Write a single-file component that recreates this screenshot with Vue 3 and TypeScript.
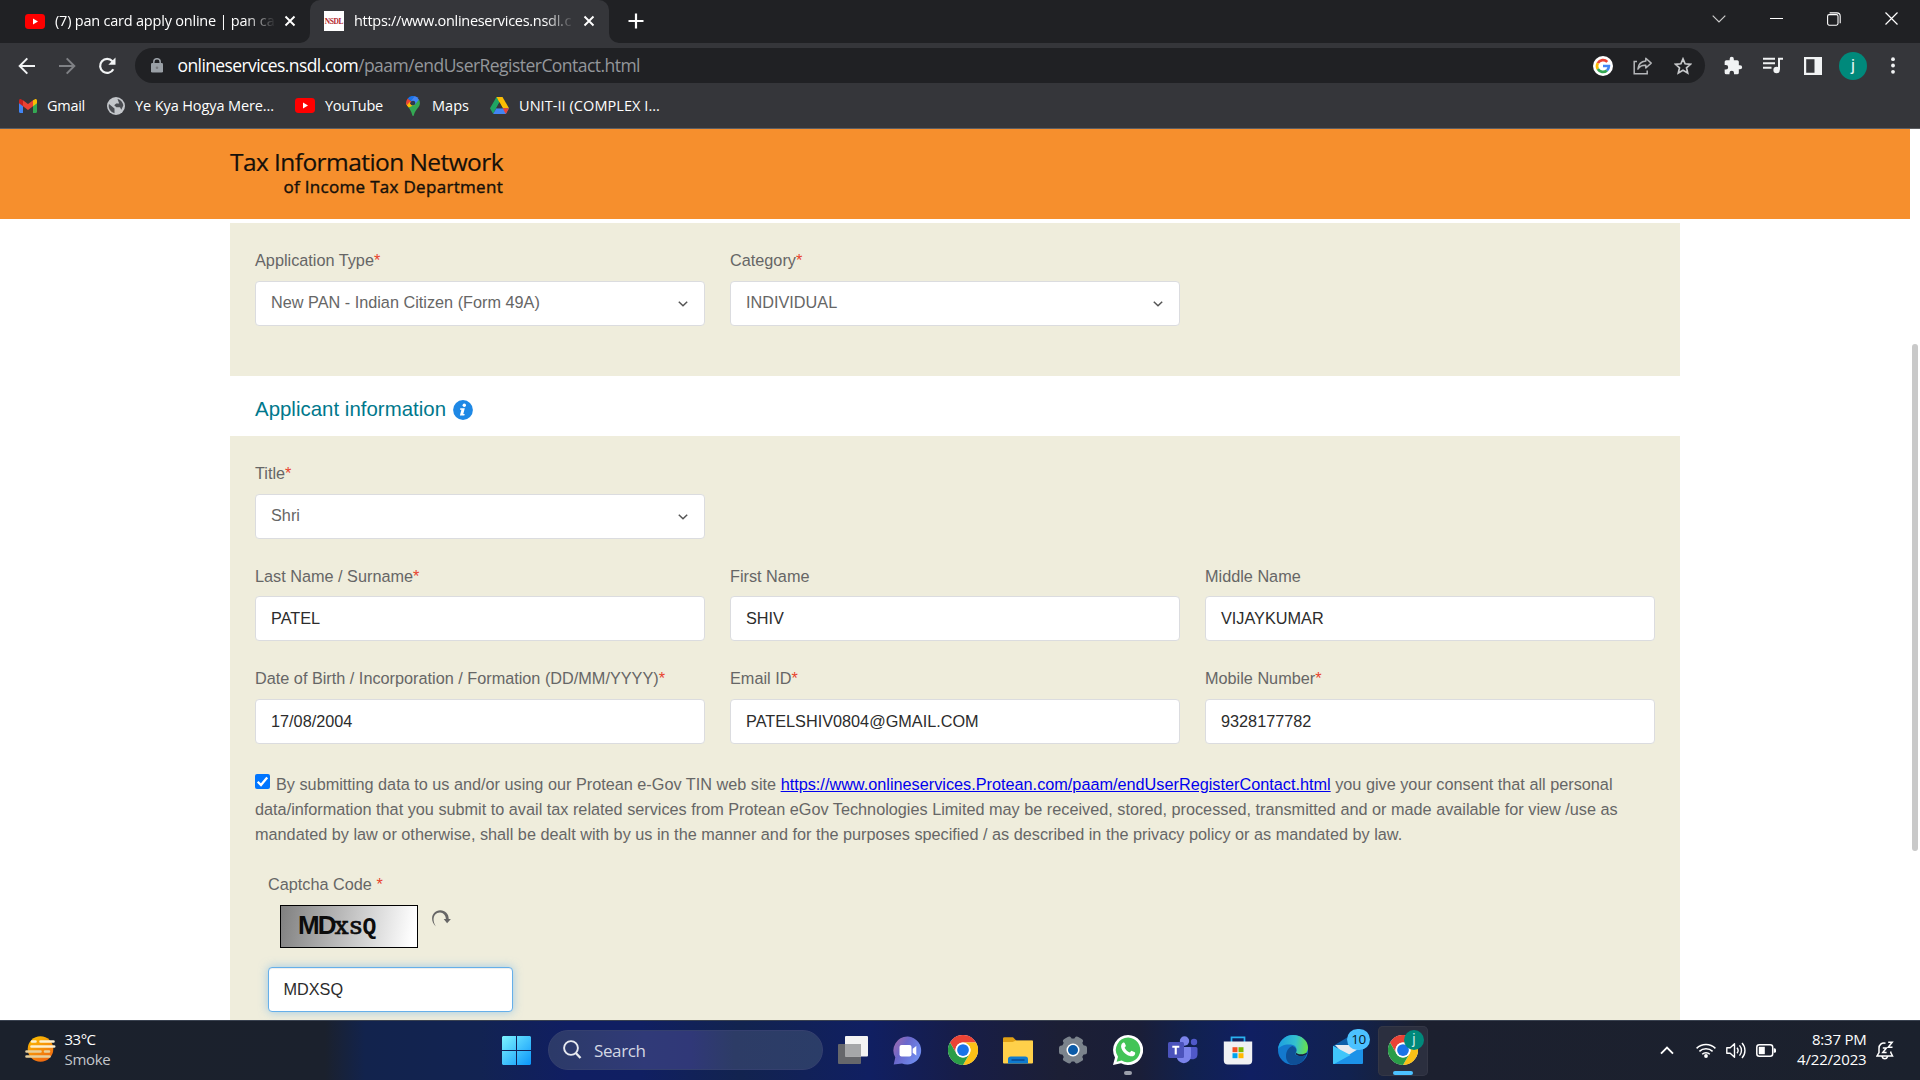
<script setup lang="ts">
import type { Directive } from 'vue'

interface Field {
  label: string
  value: string
  required?: boolean
  select?: boolean
}

/* Tracks a label in or out so that it fills the given width in pixels. */
const vFit: Directive<HTMLElement, number> = {
  mounted(el, { value }) {
    const natural = el.getBoundingClientRect().width
    const count = (el.textContent ?? '').trim().length
    el.style.letterSpacing = `${(value - natural) / count}px`
  },
}

const typeFields: Field[] = [
  { label: 'Application Type', value: 'New PAN - Indian Citizen (Form 49A)', required: true, select: true },
  { label: 'Category', value: 'INDIVIDUAL', required: true, select: true },
]
const applicantRows: Field[][] = [
  [{ label: 'Title', value: 'Shri', required: true, select: true }],
  [
    { label: 'Last Name / Surname', value: 'PATEL', required: true },
    { label: 'First Name', value: 'SHIV' },
    { label: 'Middle Name', value: 'VIJAYKUMAR' },
  ],
  [
    { label: 'Date of Birth / Incorporation / Formation (DD/MM/YYYY)', value: '17/08/2004', required: true },
    { label: 'Email ID', value: 'PATELSHIV0804@GMAIL.COM', required: true },
    { label: 'Mobile Number', value: '9328177782', required: true },
  ],
]
</script>

<template>
  <div class="desktop">
    <svg class="defs" width="0" height="0">
      <defs>
        <symbol id="youtube" viewBox="0 0 20 15">
          <rect width="20" height="15" rx="3.4" fill="#f00" />
          <path d="M8 4.6v5.8l5-2.9z" fill="#fff" />
        </symbol>
        <symbol id="cross" viewBox="0 0 12 12">
          <path d="M1.5 1.5l9 9M10.5 1.5l-9 9" stroke="#fff" stroke-width="1.9" />
        </symbol>
        <symbol id="chrome" viewBox="0 0 48 48">
          <circle cx="24" cy="24" r="24" fill="#fff" />
          <path d="M3.2 12A24 24 0 0 1 44.8 12H24A12 12 0 0 0 13.6 30z" fill="#ea4335" />
          <path d="M44.8 12A24 24 0 0 1 24 48L34.4 30A12 12 0 0 0 34.4 18L24 12z" fill="#fbc116" />
          <path d="M24 48A24 24 0 0 1 3.2 12L13.6 30A12 12 0 0 0 34.4 30z" fill="#2a9d48" />
          <circle cx="24" cy="24" r="12" fill="#fff" />
          <circle cx="24" cy="24" r="9.4" fill="#1a73e8" />
        </symbol>
      </defs>
    </svg>

    <div class="tabstrip">
      <div class="tab">
        <svg class="fav" width="20" height="15"><use href="#youtube" /></svg>
        <div class="tabtext"><span v-fit="201">(7) pan card apply online | pan</span><span>&nbsp;ca</span></div>
        <svg class="x" width="12" height="12"><use href="#cross" /></svg>
      </div>
      <div class="tab active">
        <svg class="curve left" width="10" height="10" viewBox="0 0 10 10"><path d="M10 0v10H0A10 10 0 0 0 10 0" fill="#35363a" /></svg>
        <div class="nsdl"><span>NSDL</span></div>
        <div class="tabtext"><span v-fit="206">https://www.onlineservices.nsdl</span><span v-fit="12">.c</span></div>
        <svg class="x" width="12" height="12"><use href="#cross" /></svg>
        <svg class="curve right" width="10" height="10" viewBox="0 0 10 10"><path d="M0 0v10h10A10 10 0 0 1 0 0" fill="#35363a" /></svg>
      </div>
      <svg class="plus" width="16" height="16" viewBox="0 0 16 16"><path d="M8 .5v15M.5 8h15" stroke="#fff" stroke-width="2.2" /></svg>
      <div class="controls">
        <div><svg width="14" height="8" viewBox="0 0 14 8"><path d="M.7 .7L7 7 13.300 .7" fill="none" stroke="#ccc" stroke-width="1.2" /></svg></div>
        <div><svg width="13" height="13" viewBox="0 0 13 13"><path d="M0 6.500h13" stroke="#fff" /></svg></div>
        <div><svg width="14" height="14" viewBox="0 0 14 14" fill="none" stroke="#fff" stroke-width="1.100"><rect x=".6" y="2.600" width="10.400" height="10.600" rx="1.600" /><path d="M2.600 .9h7.200a3.400 3.400 0 0 1 3.400 3.400v7" /></svg></div>
        <div><svg width="13" height="13" viewBox="0 0 13 13"><path d="M.5 .5l12 12M12.500 .5l-12 12" stroke="#fff" stroke-width="1.200" /></svg></div>
      </div>
    </div>

    <div class="toolbar">
      <div class="cell"><svg width="18" height="18" viewBox="0 0 18 18" fill="none" stroke="#f1f3f4" stroke-width="2"><path d="M17 9H2M9.300 1.400L1.700 9l7.600 7.600" /></svg></div>
      <div class="cell"><svg width="18" height="18" viewBox="0 0 18 18" fill="none" stroke="#7f8185" stroke-width="2"><path d="M1 9h15M8.700 1.400L16.300 9l-7.600 7.600" /></svg></div>
      <div class="cell"><svg width="19" height="18" viewBox="0 0 19 18"><path d="M15.300 12.200A7 7 0 1 1 14.400 4.300" fill="none" stroke="#f1f3f4" stroke-width="2.200" /><path d="M17.500 .6v7.200h-7.200z" fill="#f1f3f4" /></svg></div>
      <div class="omnibox">
        <svg class="lock" width="12" height="15" viewBox="0 0 12 15"><rect y="5" width="12" height="9.600" rx="1.300" fill="#9aa0a6" /><path d="M2.800 5.500V3.900a3.200 3.200 0 0 1 6.400 0v1.600" fill="none" stroke="#9aa0a6" stroke-width="1.500" /><circle cx="6" cy="9.800" r="1.300" fill="#77797d" /></svg>
        <div class="url"><span v-fit="180.500" class="host">onlineservices.nsdl.com</span><span v-fit="282">/paam/endUserRegisterContact.html</span></div>
        <div class="cell">
          <svg width="20" height="20" viewBox="0 0 20 20"><circle cx="10" cy="10" r="10" fill="#fff" /><g fill="none" stroke-width="2.700"><path d="M14.300 5.900A6 6 0 0 0 4.800 7.100" stroke="#ea4335" /><path d="M4.800 7.100a6 6 0 0 0 0 5.900" stroke="#fbbc05" /><path d="M4.800 13a6 6 0 0 0 9.100 1.400" stroke="#34a853" /><path d="M13.900 14.400a6 6 0 0 0 2-4.400H10" stroke="#4285f4" /></g></svg>
        </div>
        <div class="cell">
          <svg width="20" height="18" viewBox="0 0 20 18" fill="none" stroke="#b4b6b9" stroke-width="1.500"><path d="M4 4.500H1.200v12.200h13v-3.200" /><path d="M12.800 1.200l5.400 4.900-5.400 4.900V8.200C9 8 6.600 9.300 4.900 12 5.300 7.300 8 4.500 12.800 4z" stroke-linejoin="round" /></svg>
        </div>
        <div class="cell">
          <svg width="18" height="18" viewBox="0 0 18 18" fill="none" stroke="#c6c8ca" stroke-width="1.700"><path d="M9 1.900l2.100 4.900 5.400.5-4 3.500 1.200 5.200L9 13.300 4.300 16l1.200-5.200-4-3.500 5.400-.5z" /></svg>
        </div>
      </div>
      <div class="cell ext">
        <svg width="20" height="20" viewBox="0 0 24 24"><path d="M20.500 11H19V7a2 2 0 0 0-2-2h-4V3.500a2.500 2.500 0 0 0-5 0V5H4a2 2 0 0 0-2 2v3.800h1.500a2.700 2.700 0 0 1 0 5.400H2V20a2 2 0 0 0 2 2h3.800v-1.500a2.700 2.700 0 0 1 5.400 0V22H17a2 2 0 0 0 2-2v-4h1.500a2.500 2.500 0 0 0 0-5" fill="#f1f3f4" /></svg>
      </div>
      <div class="cell">
        <svg width="20" height="17" viewBox="0 0 20 17" fill="none" stroke="#f1f3f4" stroke-width="2"><path d="M0 1.800h12M0 6.300h12M0 10.800h8.500M20 1.800h-4v11" /><circle cx="13.600" cy="13" r="3.200" fill="#f1f3f4" stroke="none" /></svg>
      </div>
      <div class="cell">
        <svg width="18" height="18" viewBox="0 0 18 18"><path d="M0 0h18v18H0zM2.200 2.200v13.600h8.300V2.200z" fill="#f1f3f4" fill-rule="evenodd" /></svg>
      </div>
      <div class="cell"><div class="avatar">j</div></div>
      <div class="cell">
        <svg width="4" height="17" viewBox="0 0 4 17" fill="#f1f3f4"><circle cx="2" cy="2.200" r="1.900" /><circle cx="2" cy="8.500" r="1.900" /><circle cx="2" cy="14.800" r="1.900" /></svg>
      </div>
    </div>

    <div class="bookmarks">
      <div class="bm b1">
        <svg width="18" height="14" viewBox="0 0 18 14"><path d="M0 2v10.800c0 .7.500 1.200 1.200 1.200H4V5z" fill="#4285f4" /><path d="M18 2v10.800c0 .7-.5 1.200-1.200 1.200H14V5z" fill="#34a853" /><path d="M14 1.200L16 .2c1-.5 2 .3 2 1.500v2.500l-4 3z" fill="#fbbc04" /><path d="M4 1.200L2 .2C1-.3 0 .5 0 1.700v2.500l4 3z" fill="#c5221f" /><path d="M4 1.200L9 5l5-3.800v6L9 11 4 7.200z" fill="#ea4335" /></svg>
        <span v-fit="38">Gmail</span>
      </div>
      <div class="bm b2">
        <svg width="18" height="18" viewBox="0 0 18 18"><circle cx="9" cy="9" r="9" fill="#c3c6ca" /><path d="M2 7l5.500 4.500v4.700A7.300 7.300 0 0 1 2 7M10.500 2c3 .6 5.500 3.200 5.800 6.500l-2 4.200-1.300-2.500H9.400l-2.200-2 2-1.700h3z" fill="#4b4d52" /></svg>
        <span v-fit="139">Ye Kya Hogya Mere...</span>
      </div>
      <div class="bm b3">
        <svg width="20" height="15"><use href="#youtube" /></svg>
        <span v-fit="58">YouTube</span>
      </div>
      <div class="bm b4">
        <svg width="14" height="20" viewBox="0 0 14 20"><path d="M2.800 11.200C1.200 9.200 0 8.600.1 6.400L5 9z" fill="#fbbc04" /><path d="M7 20c-.5 0-.7-.6-.9-1.200-.6-2.600-1.800-5.100-3.500-7.200L12.900 3.300c2 3.800.8 6.500-1.500 9.300-1.600 2-2.800 3.700-3.400 6.100-.2.700-.4 1.300-1 1.300" fill="#34a853" /><path d="M.1 6.800C.3 5 .7 3.800 1.800 2.500L5.500 5.600 1.800 10.200C.7 9 0 8.600.1 6.800" fill="#ea4335" /><path d="M1.700 2.500A6.900 6.900 0 0 1 8.800.2L4.900 5.100z" fill="#1a73e8" /><path d="M8.700.1a7 7 0 0 1 4.200 3.600L8.500 9 4.700 5z" fill="#4285f4" /><path d="M2.700 11.500L.8 9.200l4.100-4.500a2.800 2.800 0 0 0 4.100 4z" fill="#fbbc04" /><circle cx="7" cy="7" r="2.300" fill="#2d3a4d" /></svg>
        <span v-fit="37">Maps</span>
      </div>
      <div class="bm b5">
        <svg width="19" height="17" viewBox="0 0 19 17"><path d="M6.500 0h6L6.300 11 3.200 17 0 11.300z" fill="#1fa463" /><path d="M6.500 0h6l6.500 11.300h-6.300z" fill="#fbbc04" /><path d="M3.200 17l3.100-5.700H19L15.800 17z" fill="#4285f4" /><path d="M19 11.300L15.800 17l-3.100-5.700z" fill="#ea4335" /><path d="M9.500 5.300l3.300 6H6.300z" fill="#35363a" /></svg>
        <span v-fit="141">UNIT-II (COMPLEX I...</span>
      </div>
    </div>

    <div class="view">
      <div class="web">
        <header class="tin">
          <div class="line1"><span v-fit="273">Tax Information Network</span></div>
          <div class="line2"><span v-fit="219.500">of Income Tax Department</span></div>
        </header>

        <section class="panel first">
          <div class="row">
            <div v-for="f in typeFields" :key="f.label" class="field">
              <label>{{ f.label }}<i>*</i></label>
              <div class="box select">
                <span>{{ f.value }}</span>
                <svg width="10" height="6" viewBox="0 0 10 6"><path d="M.8.8L5 4.800 9.200.8" fill="none" stroke="#555" stroke-width="1.500" /></svg>
              </div>
            </div>
          </div>
        </section>

        <h2>
          <span v-fit="191">Applicant information</span>
          <svg width="20" height="20" viewBox="0 0 20 20"><circle cx="10" cy="10" r="9.900" fill="#1e88e5" /><circle cx="11.300" cy="5.300" r="1.700" fill="#fff" /><path d="M7.300 8.300h4.500l-1.500 5.600h1.400l-.4 1.500H6.900l1.500-5.600H7z" fill="#fff" /></svg>
        </h2>

        <section class="panel second">
          <div v-for="(row, n) in applicantRows" :key="n" class="row">
            <div v-for="f in row" :key="f.label" class="field">
              <label>{{ f.label }}<i v-if="f.required">*</i></label>
              <div class="box" :class="{ select: f.select }">
                <span>{{ f.value }}</span>
                <svg v-if="f.select" width="10" height="6" viewBox="0 0 10 6"><path d="M.8.8L5 4.800 9.200.8" fill="none" stroke="#555" stroke-width="1.500" /></svg>
              </div>
            </div>
          </div>

          <div class="consent">
            <div>
              <svg class="check" width="15" height="15" viewBox="0 0 15 15"><rect width="15" height="15" rx="2" fill="#0075ff" /><path d="M2.700 7.800l3.300 3.300 6.200-7.600" fill="none" stroke="#fff" stroke-width="2.300" /></svg>
              <span>By submitting data to us and/or using our Protean e-Gov TIN web site <a>https://www.onlineservices.Protean.com/paam/endUserRegisterContact.html</a> you give your consent that all personal</span>
            </div>
            <div>data/information that you submit to avail tax related services from Protean eGov Technologies Limited may be received, stored, processed, transmitted and or made available for view /use as</div>
            <div>mandated by law or otherwise, shall be dealt with by us in the manner and for the purposes specified / as described in the privacy policy or as mandated by law.</div>
          </div>

          <div class="captcha">
            <label>Captcha Code <i>*</i></label>
            <div class="challenge">
              <div class="image"><b>MD</b><span class="m1">x</span><span class="m2">s</span><b class="m3">Q</b></div>
              <svg width="20" height="17" viewBox="0 0 20 17"><path d="M4.800 16.400C-2.200 9.500 1.500.4 9.300.3c5 0 8.500 3.700 8.400 8.700h2.200l-3.800 4.300L12.700 9h2.200C14.800 5.500 12.400 2.600 9 2.500 3.200 2.400.2 9.500 4.800 16.400" fill="#666" /></svg>
            </div>
            <div class="box focus"><span>MDXSQ</span></div>
          </div>
        </section>
      </div>
      <div class="scroll"><div class="thumb"></div></div>
    </div>

    <div class="taskbar">
      <div class="weather">
        <svg width="31" height="26" viewBox="0 0 31 26">
          <defs><linearGradient id="sun" x1="0" y1="0" x2=".5" y2="1"><stop offset="0" stop-color="#fdc500" /><stop offset="1" stop-color="#f06c10" /></linearGradient></defs>
          <circle cx="15.500" cy="13" r="12.800" fill="url(#sun)" />
          <g stroke-width="2.600" stroke-linecap="round"><path d="M7 5.500h3.500M15.500 5.500h13M6.500 10.500h22.700" stroke="#fdf0cf" /><path d="M1.500 15.500h14M20 15.500h4M1.500 20.500h23" stroke="#e8cf9a" /></g>
        </svg>
        <div class="wtext"><div><span v-fit="31">33°C</span></div><div class="dim"><span v-fit="46">Smoke</span></div></div>
      </div>

      <div class="start">
        <svg width="29" height="29" viewBox="0 0 29 29">
          <defs><linearGradient id="win" x1="0" y1="0" x2="1" y2="1"><stop offset="0" stop-color="#7df3ff" /><stop offset="1" stop-color="#0a95fb" /></linearGradient></defs>
          <path d="M1 0h13v14H0V1zM15 0h13l1 1v13H15zM0 15h14v14H1l-1-1zM15 15h14v13l-1 1H15z" fill="url(#win)" />
        </svg>
      </div>
      <div class="search">
        <svg width="19" height="20" viewBox="0 0 19 20"><circle cx="8" cy="8" r="6.900" fill="none" stroke="#e8eaf0" stroke-width="1.900" /><path d="M12.800 13l4.700 5" stroke="#e8eaf0" stroke-width="2.400" /></svg>
        <span v-fit="51.500">Search</span>
      </div>

      <div class="apps">
        <div class="app"><svg width="30" height="28" viewBox="0 0 30 28"><rect y="8" width="23" height="20" rx="1" fill="#66676b" /><rect x="7" y="0" width="23" height="20.500" rx="1" fill="#f3f3f3" /><path d="M7 8h16v12.500H7z" fill="#a6a7a9" /></svg></div>
        <div class="app">
          <svg width="30" height="29" viewBox="0 0 30 29"><defs><linearGradient id="chat" x1="0" y1="0" x2="1" y2=".6"><stop offset="0" stop-color="#a86aa6" /><stop offset=".45" stop-color="#6a68cc" /><stop offset="1" stop-color="#6f8df0" /></linearGradient></defs><path d="M15 .5a14 14 0 1 1-6 27L.7 28.400l1.600-7A14 14 0 0 1 15 .5" fill="url(#chat)" /><rect x="6.500" y="9" width="12" height="11.500" rx="2" fill="#fff" /><path d="M19.700 12.800L23.300 10v9.500l-3.600-2.800z" fill="#fff" /></svg>
        </div>
        <div class="app"><svg width="30" height="30"><use href="#chrome" /></svg></div>
        <div class="app">
          <svg width="30" height="27" viewBox="0 0 30 27"><path d="M0 1.500Q0 .2 1.500.2H10l3.500 3.600H30V25H0z" fill="#e0a015" /><path d="M0 5h9.500L13 3.600h16Q30 3.600 30 5v20.500q0 1-1 1H1q-1 0-1-1z" fill="#ffd04a" /><path d="M5 26.500v-4.200q0-2.800 2.800-2.800h14.400q2.800 0 2.800 2.800v4.200z" fill="#0f7bd0" /><path d="M8.500 23h13" stroke="#0a4c94" stroke-width="1.600" /></svg>
        </div>
        <div class="app">
          <svg width="30" height="30" viewBox="0 0 30 30"><g fill="#7b838c"><circle cx="15" cy="15" r="11.500" /><rect x="10.500" y="1" width="9" height="28" rx="2.500" transform="rotate(30 15 15)" /><rect x="10.500" y="1" width="9" height="28" rx="2.500" transform="rotate(90 15 15)" /><rect x="10.500" y="1" width="9" height="28" rx="2.500" transform="rotate(150 15 15)" /></g><circle cx="15" cy="15" r="6.500" fill="#fff" /><circle cx="15" cy="15" r="5" fill="#0c5ba8" /></svg>
        </div>
        <div class="app">
          <svg width="30" height="30" viewBox="0 0 30 30"><path d="M15 0a15 15 0 1 1-7 28.200L0 30l2-7.600A15 15 0 0 1 15 0" fill="#fff" /><path d="M15.200 2.600A12.300 12.300 0 1 1 8.700 25.500l-5.100 1.300 1.400-5A12.300 12.300 0 0 1 15.200 2.600" fill="#43c457" /><path d="M10.200 7.600c.8-.4 1.300 0 1.600.7l1 2.300c.2.700-.4 1.300-1.200 2.100 1.200 2.300 2.900 3.900 5.300 4.900.8-.8 1.300-2 2.100-1.700l2.800 1.400c.8.400.3 2.400-.6 3.200-2 1.500-4.700.8-7.300-.7-2.500-1.500-4.500-3.800-5.500-6.500-.8-2.200 0-4.900 1.800-5.700" fill="#fff" /></svg>
          <i class="mark"></i>
        </div>
        <div class="app">
          <svg width="30" height="28" viewBox="0 0 30 28"><circle cx="16.500" cy="5" r="4.700" fill="#7b83eb" /><circle cx="26" cy="6" r="3.200" fill="#5059c9" /><path d="M20 11h8q1.500 0 1.500 1.500v6a5 5 0 0 1-9.500 2z" fill="#5059c9" /><path d="M9.500 11H22q1 0 1 1.200V20a7.200 7.200 0 0 1-14.400 0v-8q0-1 .9-1" fill="#7b83eb" /><rect x="0" y="6" width="16" height="16" rx="1.500" fill="#4b53bc" /><path d="M4.300 9.800h7v1.900H8.800v6.800H6.700v-6.800H4.300z" fill="#fff" /></svg>
        </div>
        <div class="app">
          <svg width="30" height="29" viewBox="0 0 30 29"><path d="M8.500 6.500V1.300h13v5.200" fill="none" stroke="#2ab1f0" stroke-width="1.700" /><path d="M.8 5.500h28.400v19q0 4-4 4H4.800q-4 0-4-4z" fill="#f0f1f3" /><path d="M9.500 11.200h5v5h-5z" fill="#f25022" /><path d="M15.500 11.200h5v5h-5z" fill="#7fba00" /><path d="M9.500 17.200h5v5h-5z" fill="#00a4ef" /><path d="M15.500 17.200h5v5h-5z" fill="#ffb900" /></svg>
        </div>
        <div class="app">
          <svg width="30" height="30" viewBox="0 0 30 30"><defs><linearGradient id="edge" x1="0" y1=".2" x2="1" y2=".3"><stop offset="0" stop-color="#1b9de2" /><stop offset=".6" stop-color="#34c1ce" /><stop offset="1" stop-color="#66e04d" /></linearGradient></defs><circle cx="15" cy="15" r="15" fill="#1379ce" /><path d="M0 14.500C.7 6.200 7 0 15 0c8.500 0 15 5.500 15 12.500 0 5-3.800 8-8 8-3.500 0-5-1.300-4.500-2.500 2.500-3 .8-8-4.500-8.500C7 8.900 1.200 11 0 14.500" fill="url(#edge)" /><path d="M8 21.500c0-6 3-9.500 6.500-10.500 4 1.500 4.800 4.800 3 7-1 1.300.8 3 4.500 3 3 0 5-.5 6.500-1.800C26.500 25.500 21.500 30 16 30c-4.500 0-8-4-8-8.500" fill="#0f4f96" /><path d="M18 17.500c-1 1.800 1 3.500 5 3.500 2 0 4-.7 5.300-1.500l1.200-2-2.500 1c-4 1.600-8 .8-9-1" fill="#171d42" /></svg>
        </div>
        <div class="app">
          <svg width="30" height="27" viewBox="0 0 30 27"><path d="M0 9L15 0l15 9v4H0z" fill="#0d5ea8" /><path d="M2 8h26v9l-13 5z" fill="#e6e9ee" /><path d="M0 9l19 11-12 7H1q-1 0-1-1z" fill="#36bdf5" /><path d="M30 9v17q0 1-1 1H1z" fill="#1c92e8" /><path d="M0 9l17.500 9L1 27q-1 0-1-1z" fill="#40c6fa" /></svg>
          <span class="count">10</span>
        </div>
        <div class="app current">
          <svg width="30" height="30"><use href="#chrome" /></svg>
          <span class="who">j</span>
          <i class="mark blue"></i>
        </div>
      </div>

      <div class="tray">
        <svg class="up" width="14" height="9" viewBox="0 0 14 9"><path d="M1 7.700L7 1.500l6 6.200" fill="none" stroke="#fff" stroke-width="1.900" /></svg>
        <svg class="wifi" width="20" height="15" viewBox="0 0 20 15" fill="none" stroke="#fff" stroke-width="1.500"><path d="M.6 5.400a13.300 13.300 0 0 1 18.800 0M3.400 8.400a9.400 9.400 0 0 1 13.200 0M6.200 11.300a5.400 5.400 0 0 1 7.600 0" /><circle cx="10" cy="13" r="1.900" fill="#fff" stroke="none" /></svg>
        <svg class="vol" width="20" height="17" viewBox="0 0 20 17" fill="none" stroke="#fff" stroke-width="1.400"><path d="M.8 5.700h3.400l4.300-4v13.600l-4.300-4H.8z" stroke-linejoin="round" /><path d="M11 5.800a4.200 4.200 0 0 1 0 5.400M13.500 3.400a7.600 7.600 0 0 1 0 10.200M16 1a11 11 0 0 1 0 15" /></svg>
        <svg class="bat" width="20" height="13" viewBox="0 0 20 13"><rect x=".8" y=".8" width="15.900" height="11.400" rx="2.500" fill="none" stroke="#fff" stroke-width="1.500" /><rect x="2.800" y="2.800" width="6" height="7.400" fill="#fff" /><path d="M17.700 4.300h.8q1.500 0 1.500 1.500v1.400q0 1.500-1.500 1.500h-.8z" fill="#fff" /></svg>
        <div class="clock"><div><span v-fit="54.500">8:37 PM</span></div><div><span v-fit="69.500">4/22/2023</span></div></div>
        <svg width="18" height="19" viewBox="0 0 18 19" fill="none" stroke="#fff" stroke-width="1.500"><path d="M9.500 2.200C5.500 1.300 3 4 3 7.200v4.300L1 15h15.500l-1.700-3.500v-1M6 15.500a2.900 2.900 0 0 0 5.600 0" /><path d="M6.800 7h3.600l-3.600 4.500h3.800M12.200 1.200h4l-4 5h4.300" /></svg>
      </div>
    </div>
  </div>
</template>

<style>
body {
  margin: 0;
  overflow: hidden;
}
</style>

<style scoped>
.desktop {
  width: 1920px;
  height: 1080px;
  display: flex;
  flex-direction: column;
  overflow: hidden;
  background: #fff;
  font-family: 'Open Sans', 'Noto Sans', sans-serif;
  white-space: nowrap;
}
.defs { position: absolute; }
svg { display: block; flex: none; }
i { font-style: normal; }

.tabstrip { height: 43px; background: #202124; display: flex; flex: none; }
.tab { display: flex; align-items: center; color: #fff; font-size: 14.5px; width: 310px; box-sizing: border-box; padding-left: 25px; height: 42px; }
.tab .fav { margin-right: 10px; }
.tabtext { width: 221px; line-height: 24px; -webkit-mask-image: linear-gradient(90deg, #000 190px, transparent 221px); mask-image: linear-gradient(90deg, #000 190px, transparent 221px); }
.x { margin-left: 8px; }
.tab.active { position: relative; width: 299px; height: 43px; background: #35363a; border-radius: 10px 10px 0 0; padding: 0 0 1px 14px; }
.curve { position: absolute; bottom: 0; }
.curve.left { left: -10px; }
.curve.right { right: -10px; }
.nsdl { width: 20px; height: 20px; background: #fff; display: flex; align-items: center; justify-content: center; margin-right: 10px; }
.nsdl span { font: bold 7.500px 'Liberation Serif', serif; color: #b3262d; letter-spacing: -.4px; }
.plus { margin: 13px 0 0 19px; }
.controls { margin-left: auto; display: flex; height: 37px; }
.controls div { width: 57.300px; display: flex; align-items: center; justify-content: center; }

.toolbar { height: 45px; background: #35363a; display: flex; align-items: center; padding-left: 7px; flex: none; }
.cell { width: 40px; display: flex; justify-content: center; align-items: center; flex: none; }
.omnibox { width: 1570px; height: 35px; border-radius: 18px; background: #202124; margin-left: 8px; display: flex; align-items: center; box-sizing: border-box; padding: 0 2px 0 16px; }
.url { margin: -1px 0 0 14.500px; flex: 1; font-size: 17.500px; color: #94979b; line-height: 28px; }
.host { color: #fff; }
.ext { margin-left: 8px; }
.avatar { width: 28px; height: 28px; border-radius: 50%; background: #00897b; color: #e6f4f2; font: 17px/27px Roboto, sans-serif; text-align: center; }

.bookmarks { height: 41px; background: #35363a; border-bottom: 1px solid #5c5e62; box-sizing: border-box; display: flex; padding: 0 0 5px 19px; flex: none; }
.bm { display: flex; align-items: center; color: #fff; font-size: 14.500px; box-sizing: border-box; }
.bm svg { margin-right: 10px; }
.bm span { margin-top: -1px; }
.b1 { width: 88px; }
.b2 { width: 188px; }
.b3 { width: 111px; }
.b4 { width: 84px; }
.b4 svg { margin-right: 12px; }

.view { height: 891px; flex: none; display: flex; overflow: hidden; font: 16.250px/25px 'Liberation Sans', Arial, sans-serif; color: #666; }
.web { width: 1910px; }
.tin { height: 90px; background: #f68f2d; box-sizing: border-box; padding: 16px 0 0 230px; color: #15100a; }
.line1, .line2 { font-family: 'Open Sans', 'Noto Sans', sans-serif; width: 273px; text-align: right; }
.line1 { font-size: 24.500px; line-height: 34px; -webkit-text-stroke: .2px #15100a; }
.line2 { font-size: 17px; line-height: 20px; -webkit-text-stroke: .4px #15100a; margin-top: -2px; }
.panel { width: 1450px; margin-left: 230px; background: #efeddc; box-sizing: border-box; padding: 25px 25px 0; }
.first { margin-top: 4px; height: 153px; }
.second { height: 700px; }
.row { display: flex; gap: 25px; margin-bottom: 25px; }
.field { width: 450px; }
label { display: block; height: 25px; margin-bottom: 8px; }
.second .row:nth-child(2) label { margin-bottom: 7px; }
label i { color: #e8432e; }
.box { height: 45px; box-sizing: border-box; border: 1px solid #dbdcdf; border-radius: 4px; background: #fff; color: #2c2c2c; display: flex; align-items: center; padding: 0 15px; }
.select { color: #666; justify-content: space-between; padding: 0 16px 2px 15px; }
.select svg { margin-top: 3px; }
h2 { margin: 0; height: 60px; display: flex; align-items: center; box-sizing: border-box; padding: 7px 0 0 255px; font-size: 20.400px; font-weight: normal; color: #00788c; }
h2 svg { margin: 1px 0 0 7px; }
.consent { margin-top: 28px; }
.consent div { height: 25px; width: max-content; }
.consent div:first-child { display: flex; }
.check { margin: 2px 6px 0 0; }
a { color: #0000ee; text-decoration: underline; }
.captcha { margin: 25px 0 0 13px; }
.challenge { display: flex; margin-left: 12px; }
.challenge svg { margin: 5px 0 0 12.500px; }
.image { width: 138px; height: 43px; box-sizing: border-box; border: 1px solid #000; background: linear-gradient(100deg, #808080, #fff 96%); color: #0c0c0c; display: flex; align-items: baseline; padding-left: 17px; line-height: 38px; }
.image b:first-child { font-size: 26px; letter-spacing: -2px; }
.m1, .m2 { font-family: 'DejaVu Serif', serif; font-size: 25px; -webkit-text-stroke: .7px #0c0c0c; }
.m1 { width: 15px; }
.m2 { width: 13px; }
.m3 { font-family: 'Liberation Mono', monospace; font-size: 23px; }
.focus { width: 245px; margin-top: 19px; border-color: #66afe9; box-shadow: 0 0 10px rgba(102, 175, 233, .6), inset 0 1px 1px rgba(0, 0, 0, .07); padding-left: 14.500px; }
.scroll { width: 10px; background: #fff; }
.thumb { width: 6px; height: 507px; margin: 215px 0 0 2px; border-radius: 3px; background: #c9c9c9; }

.taskbar { height: 60px; flex: none; box-sizing: border-box; border-top: 1px solid #3a4250; display: flex; align-items: center; color: #fff; background: linear-gradient(90deg, #1b212c 0, #1b212d 325px, #12234d 365px, #122352 480px, #101e62 570px, #101f62 640px, #12234f 740px, #101f62 870px, #171d48 960px, #1c1f35 1060px, #1a1e38 1140px, #11214f 1190px, #101f62 1250px, #11224f 1350px, #1c202f 1420px, #1b212d 100%); }
.weather { display: flex; width: 501.500px; padding-left: 25px; box-sizing: border-box; align-items: center; }
.weather svg { margin: -3px 8.500px 0 0; }
.wtext { font-size: 15px; line-height: 20px; margin-top: -3px; }
.dim { color: #c3c6cb; }
.start { width: 46.500px; }
.search { width: 275px; height: 40px; border-radius: 20px; background: linear-gradient(90deg, #2c3a68, #303a78 35%, #303878 52%, #2d3c66 68%, #2b3d68); display: flex; align-items: center; box-sizing: border-box; padding-left: 14px; color: #d3d7e3; font-size: 17px; border: 1px solid #35406f; margin-top: -1px; }
.search span { margin: 0 0 0 12px; }
.apps { display: flex; margin-left: 2.500px; }
.app { position: relative; width: 55px; height: 50px; display: flex; align-items: center; justify-content: center; }
.app > svg { margin-top: -1px; }
.current { width: 50px; margin-left: 2.500px; background: #2b2f3f; border-radius: 5px; box-shadow: inset 0 0 0 1px #343746; }
.mark { position: absolute; left: 50%; bottom: 1px; width: 8px; height: 4px; margin-left: -4px; border-radius: 2px; background: #9b9fab; }
.mark.blue { width: 20px; margin-left: -10px; background: #4cc2ff; }
.count, .who { position: absolute; text-align: center; border-radius: 50%; }
.count { left: 26.500px; top: 3px; width: 23px; height: 21px; background: #4cc2ff; color: #0a1a2a; font-size: 13.500px; line-height: 21px; border-radius: 11px; letter-spacing: -.5px; }
.who { left: 26px; top: 4px; width: 20px; height: 20px; background: #00897b; color: #c9e8e4; font: 14px/19px Roboto, sans-serif; }
.tray { margin-left: auto; display: flex; align-items: center; padding-right: 26px; }
.up { margin-right: 22px; }
.wifi, .vol { margin-right: 10px; }
.bat { margin-right: 21px; }
.clock { width: 70px; text-align: right; font-size: 15px; line-height: 20px; margin: -3px 9.500px 0 0; }
</style>
